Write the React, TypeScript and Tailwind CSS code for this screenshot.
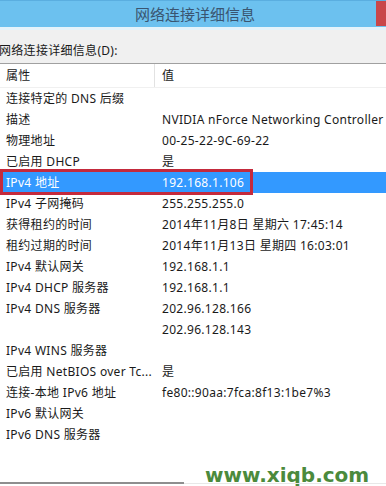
const rows: [string, string][] = [
  ["连接特定的 DNS 后缀", ""],
  ["描述", "NVIDIA nForce Networking Controller"],
  ["物理地址", "00-25-22-9C-69-22"],
  ["已启用 DHCP", "是"],
  ["IPv4 地址", "192.168.1.106"],
  ["IPv4 子网掩码", "255.255.255.0"],
  ["获得租约的时间", "2014年11月8日 星期六 17:45:14"],
  ["租约过期的时间", "2014年11月13日 星期四 16:03:01"],
  ["IPv4 默认网关", "192.168.1.1"],
  ["IPv4 DHCP 服务器", "192.168.1.1"],
  ["IPv4 DNS 服务器", "202.96.128.166"],
  ["", "202.96.128.143"],
  ["IPv4 WINS 服务器", ""],
  ["已启用 NetBIOS over Tc...", "是"],
  ["连接-本地 IPv6 地址", "fe80::90aa:7fca:8f13:1be7%3"],
  ["IPv6 默认网关", ""],
  ["IPv6 DNS 服务器", ""],
];

export default function App() {
  return (
    <div
      className="w-[386px] h-[486px] overflow-hidden bg-white text-[#1a1a1a] text-[12px] tracking-[0.3px] leading-none"
      style={{ fontFamily: '"Noto Sans", "Noto Sans CJK SC", sans-serif' }}
    >
      {/* 标题栏 */}
      <div className="relative h-[27px] bg-[#6cc1ef] border-t border-[#5aaee0] flex items-center justify-center">
        <span className="text-[15px] tracking-normal text-[#3a5570] pl-[4px]">网络连接详细信息</span>
        <div className="absolute right-0 top-0 w-[10px] h-[25px] bg-[#c9474a]" />
      </div>
      <div className="h-[3px] bg-[#e4f3fb]" />

      {/* 标签 */}
      <div className="bg-[#f0f0f0] h-[33px] flex items-end pb-[6px] -ml-[1px]">
        网络连接详细信息(D):
      </div>

      {/* 列表 */}
      <div className="border-t border-[#a0a0a0]">
        <div className="h-[24px] flex items-center border-b border-[#f0f0f0]">
          <div className="w-[155px] pl-[6px] h-full flex items-center border-r border-[#e2e2e2]">属性</div>
          <div className="pl-[7px]">值</div>
        </div>
        {rows.map(([k, v], i) => {
          const sel = i === 4;
          return (
            <div
              key={i}
              className={
                sel
                  ? "relative h-[21px] flex items-center bg-[#3399ff] text-white"
                  : "h-[21px] flex items-center"
              }
            >
              <div className="w-[162px] pl-[6px] whitespace-nowrap">{k}</div>
              <div className="whitespace-nowrap">{v}</div>
              {sel && (
                <div className="absolute left-0 top-[-3px] w-[253px] h-[26px] border-[3px] border-[#c42a3c]" />
              )}
            </div>
          );
        })}
      </div>

      {/* 底部 */}
      <div className="relative h-[41px]">
        <div
          className="absolute left-[205px] top-[20px] text-[20px] leading-none font-bold text-[#4b8a3c] tracking-normal"
          style={{ fontFamily: '"DejaVu Sans", sans-serif' }}
        >
          www.xiqb.com
        </div>
        <div className="absolute left-0 top-[37px] w-[184px] h-[2px] bg-[#8e8e8e]" />
        <div className="absolute left-[184px] top-[38px] w-[202px] h-[1px] bg-[#e8e8e8]" />
      </div>
    </div>
  );
}
